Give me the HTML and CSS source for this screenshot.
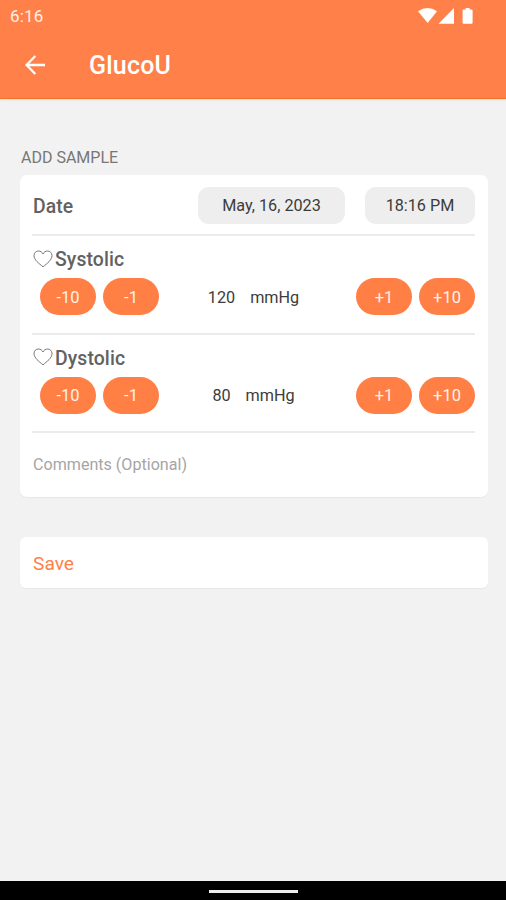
FILE: index.html
```html
<!DOCTYPE html>
<html lang="en">
<head>
<meta charset="utf-8">
<title>GlucoU</title>
<link rel="stylesheet" href="styles.css">
</head>
<body>
<div class="screen">
  <header class="header">
    <div class="status">
      <span class="clock">6:16</span>
      <svg class="status-icons" width="56" height="18" viewBox="0 0 56 18" fill="#fff">
        <path d="M-1 3.200Q8.500 -3.200 18 3.200L8.700 15Z"/>
        <path d="M35 0V15.800H19.500Z"/>
        <path d="M46.600 0h4v1.500h2a1 1 0 0 1 1 1v12.300a1 1 0 0 1-1 1h-8a1 1 0 0 1-1-1V2.500a1 1 0 0 1 1-1h2z"/>
      </svg>
    </div>
    <div class="appbar">
      <svg class="back" width="20" height="20" viewBox="0 0 20 20" fill="none" stroke="#fff" stroke-width="2.300"><path d="M20 10H2M10.300 1L1.500 10l8.800 9"/></svg>
      <h1 class="title">GlucoU</h1>
    </div>
  </header>
  <main class="content">
    <h2 class="section">ADD SAMPLE</h2>
    <section class="card">
      <div class="row date-row">
        <span class="label">Date</span>
        <button class="chip chip-date">May, 16, 2023</button>
        <button class="chip chip-time">18:16 PM</button>
      </div>
      <div class="row measure">
        <div class="label heading"><svg class="heart" width="20" height="18" viewBox="0 0 20 18"><path d="M10 16.800C6 13.500 1 10 1 5.600C1 2.900 3 1 5.400 1C7.500 1 9.200 2.200 10 4C10.800 2.200 12.500 1 14.600 1C17 1 19 2.900 19 5.600C19 10 14 13.500 10 16.800Z"/></svg>Systolic</div>
        <div class="controls">
          <button class="step">-10</button><button class="step">-1</button>
          <div class="reading"><span>120</span><span>mmHg</span></div>
          <button class="step">+1</button><button class="step">+10</button>
        </div>
      </div>
      <div class="row measure">
        <div class="label heading"><svg class="heart" width="20" height="18" viewBox="0 0 20 18"><path d="M10 16.800C6 13.500 1 10 1 5.600C1 2.900 3 1 5.400 1C7.500 1 9.200 2.200 10 4C10.800 2.200 12.500 1 14.600 1C17 1 19 2.900 19 5.600C19 10 14 13.500 10 16.800Z"/></svg>Dystolic</div>
        <div class="controls">
          <button class="step">-10</button><button class="step">-1</button>
          <div class="reading"><span>80</span><span>mmHg</span></div>
          <button class="step">+1</button><button class="step">+10</button>
        </div>
      </div>
      <div class="comments">Comments (Optional)</div>
    </section>
    <button class="save">Save</button>
  </main>
  <footer class="navbar"><span class="handle"></span></footer>
</div>
</body>
</html>
```
FILE: styles.css
```css
* { box-sizing: border-box; }
body { margin: 0; font-family: Roboto, "Liberation Sans", sans-serif; }
button { border: 0; padding: 0; font: inherit; }
.screen { width: 506px; height: 900px; display: flex; flex-direction: column; background: #f2f2f2; }
.header { height: 99px; background: #ff8048; border-bottom: 1px solid #ee7426; color: #fff; box-shadow: 0 1px 2px #00000018; }
.status { height: 32px; display: flex; justify-content: space-between; padding: 0 31px 0 10px; }
.clock { font-size: 17px; line-height: 32px; letter-spacing: 0.2px; color: #fff0e9; }
.status-icons { margin-top: 7.5px; overflow: visible; }
.appbar { height: 66px; display: flex; align-items: center; padding-left: 25px; }
.title { margin: 2px 0 0 44px; font-size: 25px; line-height: 30px; font-weight: 500; letter-spacing: 0.2px; }
.content { flex: 1; padding: 48px 18px 0 20px; }
.section { margin: 0; height: 28px; padding-left: 1px; font-size: 16px; line-height: 21px; font-weight: 400; color: #777; }
.card { height: 322px; padding: 0 13px 0 12px; background: #fff; border-radius: 7px; box-shadow: 0 1px 1px #0000000c; }
.row { border-bottom: 2px solid #ebebeb; }
.date-row { height: 61px; display: flex; align-items: center; padding: 2px 0 0 1px; }
.label { font-size: 19.4px; font-weight: 500; color: #626262; letter-spacing: 0.1px; }
.date-row .label { padding-top: 1px; }
.chip { height: 37px; border-radius: 11px; background: #eee; color: #3c3c3c; font-size: 16.2px; }
.chip-date { width: 147px; margin-left: auto; }
.chip-time { width: 110px; margin-left: 20px; }
.measure { height: 98.5px; padding-top: 11px; }
.heading { display: flex; align-items: center; height: 25px; padding-left: 1px; gap: 2px; }
.heart { margin-bottom: 2px; fill: none; stroke: #777; stroke-width: 1; }
.controls { display: flex; align-items: center; gap: 7px; margin-top: 6px; padding-left: 8px; }
.step { width: 56px; height: 37px; padding-top: 1px; border-radius: 19px; background: #ff7f45; color: #fff2ea; font-size: 16.5px; }
.reading { flex: 1; display: flex; justify-content: center; gap: 15px; padding: 2px 8px 0 0; font-size: 16.2px; line-height: 20px; color: #3c3c3c; }
.comments { height: 63px; padding-left: 1px; font-size: 16.1px; line-height: 64px; color: #a5a5a5; }
.save { display: block; width: 100%; height: 51px; margin-top: 39.5px; padding: 2px 0 0 13px; text-align: left; background: #fff; border-radius: 6px; color: #ff8048; font-size: 19.2px; box-shadow: 0 1px 1px #0000000c; }
.navbar { height: 19px; display: flex; justify-content: center; align-items: center; background: #000; }
.handle { width: 89px; height: 3px; margin-top: 2px; background: #eee; }
```
